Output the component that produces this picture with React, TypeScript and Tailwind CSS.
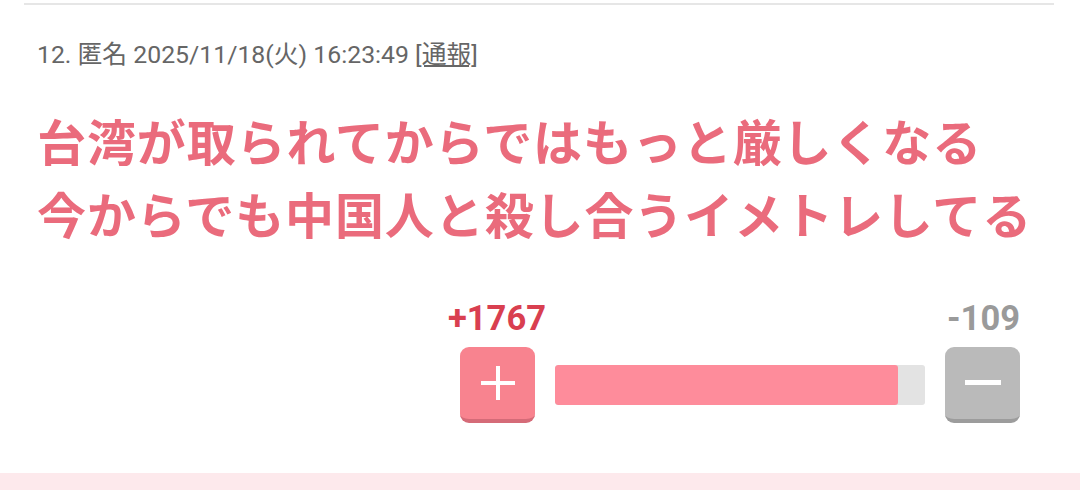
import React from 'react';

const jp = { fontFamily: 'Roboto, "Noto Sans CJK JP", sans-serif' };

export default function App() {
  const plus = 1767;
  const minus = 109;
  // the site's bar leaves a little more grey than the raw ratio
  const ratio = 92.7;

  return (
    <div className="w-[1080px] h-[490px] bg-white overflow-hidden flex flex-col" style={jp}>
      <div className="mt-[3px] ml-[24px] mr-[26px] h-[2px] bg-[#e6e6e6]" />

      <div className="px-[37px] pt-[34px] text-[24.8px] leading-[32px] text-[#666666]">
        12. 匿名 2025/11/18(火) 16:23:49 <span className="underline underline-offset-2">[通報]</span>
      </div>

      <div className="px-[37px] mt-[37px] text-[49px] leading-[73px] font-bold text-[#ea6b7c] tracking-[0.9px]">
        <div>台湾が取られてからではもっと厳しくなる</div>
        <div>今からでも中国人と殺し合うイメトレしてる</div>
      </div>

      <div className="mt-[44px] ml-[448px] w-[572px]">
        <div className="flex justify-between text-[34.5px] leading-[40px] font-bold">
          <span className="text-[#d93f50]">+{plus}</span>
          <span className="text-[#9a9a9a]">-{minus}</span>
        </div>
        <div className="mt-[9px] pl-[12px] flex items-center gap-[20px]">
          <button className="w-[75px] h-[76px] rounded-[9px] bg-[#f8838f] border-b-[4px] border-[#d56b78] flex items-center justify-center">
            <svg width="34" height="34" viewBox="0 0 34 34">
              <rect x="15" y="0" width="4" height="34" fill="#fff" />
              <rect x="0" y="15" width="34" height="4" fill="#fff" />
            </svg>
          </button>
          <div className="w-[370px] h-[40px] rounded-[3px] bg-[#e3e3e3] overflow-hidden">
            <div className="h-full bg-[#fe8c9b] rounded-[3px]" style={{ width: `${ratio}%` }} />
          </div>
          <button className="w-[75px] h-[76px] rounded-[9px] bg-[#bababa] border-b-[4px] border-[#9c9c9c] flex items-center justify-center">
            <svg width="36" height="6" viewBox="0 0 36 6">
              <rect x="0" y="0" width="36" height="5" fill="#fff" />
            </svg>
          </button>
        </div>
      </div>

      <div className="mt-auto h-[17px] bg-[#fde9ec]" />
    </div>
  );
}
